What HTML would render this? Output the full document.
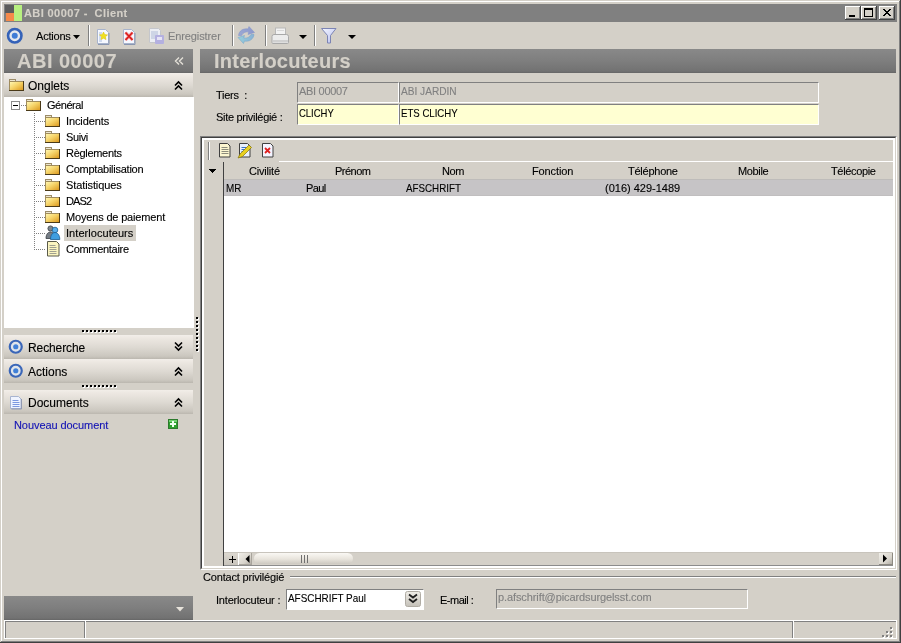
<!DOCTYPE html>
<html><head><meta charset="utf-8">
<style>
*{margin:0;padding:0;box-sizing:border-box}
html,body{width:901px;height:643px;overflow:hidden;background:#d4d0c8;font-family:"Liberation Sans",sans-serif;font-size:11px;color:#000}
.a{position:absolute}
.t{position:absolute;white-space:nowrap;line-height:13px;-webkit-text-stroke:0.12px currentColor}
.hdr{position:absolute;background:linear-gradient(#898989,#7e7e7e 50%,#727272 92%,#666 100%)}
.sec{position:absolute;left:4px;width:189px;height:24px;background:linear-gradient(#f2eee9 0,#ede8e2 12%,#dedad3 50%,#cbc7bf 88%,#bbb7af 100%)}
.b12{font-size:12px;line-height:14px}
svg{position:absolute;overflow:visible}
</style></head><body><div style="position:absolute;left:0;top:0;width:901px;height:643px;will-change:transform">
<!-- window frame -->
<div class="a" style="left:1px;top:1px;width:1px;height:640px;background:#fff"></div>
<div class="a" style="left:1px;top:1px;width:898px;height:1px;background:#fff"></div>
<div class="a" style="left:899px;top:1px;width:1px;height:641px;background:#808080"></div>
<div class="a" style="left:900px;top:0;width:1px;height:643px;background:#404040"></div>
<div class="a" style="left:1px;top:641px;width:899px;height:1px;background:#808080"></div>
<div class="a" style="left:0;top:642px;width:901px;height:1px;background:#404040"></div>

<!-- title bar -->
<div class="a" style="left:4px;top:4px;width:893px;height:18px;background:#808080"></div>
<div class="a" style="left:5px;top:5px;width:9px;height:8px;background:#5c5c5c"></div>
<div class="a" style="left:6px;top:13px;width:8px;height:8px;background:#f58a4a"></div>
<div class="a" style="left:14px;top:5px;width:8px;height:16px;background:#b8f080"></div>
<div class="t" style="left:24px;top:7px;font-weight:bold;color:#d4d0c8;letter-spacing:0.4px">ABI 00007 -&nbsp; Client</div>
<svg style="left:845px;top:6px" width="50" height="14" shape-rendering="crispEdges">
 <g id="wb"><rect x="0" y="0" width="16" height="14" fill="#404040"/><rect x="0" y="0" width="15" height="13" fill="#fff"/><rect x="1" y="1" width="14" height="12" fill="#808080"/><rect x="1" y="1" width="13" height="11" fill="#d4d0c8"/></g>
 <use href="#wb" x="16"/><use href="#wb" x="34"/>
 <rect x="4" y="9" width="6" height="2" fill="#000"/>
 <rect x="19" y="2" width="9" height="9" fill="#000"/><rect x="20" y="4" width="7" height="6" fill="#d4d0c8"/>
 <path d="M38 3h2v1h1v1h2v-1h1v-1h2v1h-1v1h-1v1h-1v1h1v1h1v1h1v1h-2v-1h-1v-1h-2v1h-1v1h-2v-1h1v-1h1v-1h1v-1h-1v-1h-1v-1h-1z" fill="#000"/>
</svg>

<!-- toolbar -->
<svg style="left:0;top:22px" width="360" height="26">
 <defs>
  <g id="tgt"><circle cx="7.75" cy="7.75" r="6.7" fill="#e4e8ee" stroke="#3462b8" stroke-width="2.6"/><circle cx="7.75" cy="7.75" r="3" fill="#3f7cd6"/></g><g id="tgt2"><circle cx="7.75" cy="7.75" r="6.0" fill="#dfe4ea" stroke="#3a66b8" stroke-width="2.2"/><circle cx="7.75" cy="7.75" r="2.6" fill="#4080d8"/></g>
 </defs>
 <use href="#tgt" x="7" y="6"/>
 <path d="M73 13h7l-3.5 4z" fill="#000"/>
 <rect x="88" y="3" width="1" height="21" fill="#808080"/><rect x="89" y="3" width="1" height="21" fill="#fff"/>
 <!-- new -->
 <path d="M97.5 7.5h8l3 3v11h-11z" fill="#f6f8ff" stroke="#a8b4cc"/><path d="M109 11v11.5h-11" stroke="#8a96b0" fill="none"/>
 <path d="M99 11h3M99 13h2M99 15h2M99 17h2M99 19h3" stroke="#a8bce0"/>
 <path d="M103.5 10l1.2 2.6 2.8.3-2.1 1.9.6 2.8-2.5-1.4-2.5 1.4.6-2.8-2.1-1.9 2.8-.3z" fill="#f0e020" stroke="#d8c000" stroke-width=".5"/>
 <!-- delete -->
 <path d="M123.5 7.5h8l3 3v11h-11z" fill="#f6f8ff" stroke="#a8b4cc"/><path d="M135 11v11.5h-11" stroke="#8a96b0" fill="none"/>
 <path d="M125.5 10.5l7 7.5M132.5 10.5l-7 7.5" stroke="#f49090" stroke-width="3"/>
 <path d="M125.5 10.5l7 7.5M132.5 10.5l-7 7.5" stroke="#d81818" stroke-width="1.4"/>
 <!-- save disabled -->
 <path d="M149.5 6.5h9l2 2v12h-11z" fill="#eceef4" stroke="#c4c6cc"/>
 <path d="M151 10h7M151 12h7M151 14h5M151 16h5" stroke="#b0bcd8" stroke-width="1"/>
 <rect x="155" y="13" width="9" height="9" rx="1" fill="#b4b0e0"/><rect x="157" y="15" width="5" height="3" fill="#e6e4f6"/>
 <rect x="232" y="3" width="1" height="21" fill="#808080"/><rect x="233" y="3" width="1" height="21" fill="#fff"/>
 <!-- refresh -->
 <defs><linearGradient id="rg1" x1="0" y1="0" x2="1" y2="0"><stop offset="0" stop-color="#9aa8d4"/><stop offset="1" stop-color="#8c98cc"/></linearGradient><linearGradient id="rg2" x1="0" y1="0" x2="1" y2="0"><stop offset="0" stop-color="#98d0dc"/><stop offset="1" stop-color="#88b0d4"/></linearGradient></defs>
 <path d="M238.5 13.5c.5-4.5 4.5-7.5 9.5-6.5l1-2.5 5.5 6-6.5 2 .8-2.5c-3-.6-6 .8-7.3 3.5z" fill="url(#rg1)" stroke="#8090c8" stroke-width=".5"/>
 <path d="M254 12.5c-.5 4.5-4.5 7.5-9.5 6.5l-1 2.5-5.5-6 6.5-2-.8 2.5c3 .6 6-.8 7.3-3.5z" fill="url(#rg2)" stroke="#70a0c8" stroke-width=".5"/>
 <rect x="265" y="3" width="1" height="21" fill="#808080"/><rect x="266" y="3" width="1" height="21" fill="#fff"/>
 <!-- printer -->
 <rect x="275.5" y="6" width="10" height="8" fill="#f2f2f2" stroke="#b8b8b8"/>
 <rect x="277" y="8" width="7" height="1" fill="#d8d8d8"/>
 <path d="M272 14.5q0-2 2-2h12.5q2 0 2 2v6q0 1-1 1h-14.5q-1 0-1-1z" fill="#ececec" stroke="#a8a8a8"/>
 <rect x="273" y="18" width="15" height="2.5" fill="#d0d0d0"/>
 <path d="M299 13h8l-4 4z" fill="#000"/>
 <rect x="314" y="3" width="1" height="21" fill="#808080"/><rect x="315" y="3" width="1" height="21" fill="#fff"/>
 <!-- funnel -->
 <defs><linearGradient id="fng" x1="0" y1="0" x2="1" y2="1"><stop offset="0" stop-color="#f4f6ff"/><stop offset="1" stop-color="#b8c0f0"/></linearGradient></defs><path d="M321.5 6.5h14.5l-5.5 7v7.5h-3v-7.5z" fill="url(#fng)" stroke="#7c84b4" stroke-linejoin="round"/>
 <path d="M348 13h8l-4 4z" fill="#000"/>
</svg>
<div class="t" style="left:36px;top:30px;letter-spacing:-0.2px">Actions</div>
<div class="t" style="left:168px;top:30px;color:#808080;letter-spacing:-0.1px">Enregistrer</div>

<!-- left panel -->
<div class="hdr" style="left:4px;top:49px;width:189px;height:24px"></div>
<div class="t" style="left:17px;top:50px;font-size:20px;line-height:23px;font-weight:bold;color:#d4d0c8;letter-spacing:0.5px">ABI 00007</div>
<svg style="left:174px;top:57px" width="10" height="9"><path d="M5 .5L1.5 4 5 7.5M9 .5L5.5 4 9 7.5" stroke="#e4e0d8" stroke-width="1.4" fill="none"/></svg>
<div class="sec" style="top:73px"></div>
<svg style="left:9px;top:78px" width="16" height="14" shape-rendering="crispEdges"><use href="#fold" x="0" y="1"/></svg>
<div class="t b12" style="left:28px;top:79px">Onglets</div>
<svg style="left:174px;top:81px" width="10" height="10"><path d="M1 4.5L4.5 1 8 4.5M1 8.5L4.5 5 8 8.5" stroke="#000" stroke-width="1.6" fill="none"/></svg>
<div class="a" style="left:4px;top:97px;width:190px;height:231px;background:#fff"></div>
<svg style="left:0;top:0" width="193" height="328" shape-rendering="crispEdges">
<defs><linearGradient id="fg" x1="0" y1="0" x2="1" y2="1"><stop offset="0" stop-color="#fff6b0"/><stop offset="0.45" stop-color="#f6d46a"/><stop offset="1" stop-color="#dc9a20"/></linearGradient><g id="fold"><rect x="0" y="0" width="7" height="3" fill="#9c8c68"/><rect x="1" y="1" width="5" height="1" fill="#ece6d0"/><rect x="0" y="2" width="15" height="10" fill="#4a3a18"/><rect x="0" y="2" width="14" height="9" fill="#a08c5c"/><rect x="1" y="3" width="13" height="8" fill="url(#fg)"/></g></defs>
<rect x="11.5" y="101.5" width="8" height="8" fill="#fff" stroke="#8c8c8c"/><rect x="13" y="105" width="5" height="1" fill="#000"/>
<path d="M21 105.5h5 M34.5 113V250 M36 121.5h9 M36 137.5h9 M36 153.5h9 M36 169.5h9 M36 185.5h9 M36 201.5h9 M36 217.5h9 M36 233.5h9 M36 249.5h9" stroke="#808080" stroke-width="1" stroke-dasharray="1 1" fill="none"/>
<use href="#fold" x="26" y="99"/>
<use href="#fold" x="45" y="115"/>
<use href="#fold" x="45" y="131"/>
<use href="#fold" x="45" y="147"/>
<use href="#fold" x="45" y="163"/>
<use href="#fold" x="45" y="179"/>
<use href="#fold" x="45" y="195"/>
<use href="#fold" x="45" y="211"/>
</svg>
<div class="a" style="left:64px;top:225px;width:72px;height:16px;background:#d4d0c8"></div>
<svg style="left:45px;top:225px" width="16" height="32">
 <circle cx="5.5" cy="3.5" r="2.6" fill="#7d858c" stroke="#3a3f44" stroke-width=".8"/>
 <path d="M1 13.5c0-4 1.8-6.5 4.5-6.5s4.5 2.5 4.5 6.5z" fill="#757d85" stroke="#3a3f44" stroke-width=".8"/>
 <circle cx="10" cy="5" r="2.8" fill="#58b0ec" stroke="#1c5c90" stroke-width=".8"/>
 <path d="M5.5 14.5c0-4.5 2-7 4.5-7s4.8 2.5 4.8 7z" fill="#3f9ee0" stroke="#1c5c90" stroke-width=".8"/>
 <path d="M2.5 16.5h9l2.5 2.5v12h-11.5z" fill="#fbf5c0" stroke="#5a5a4a"/>
 <path d="M4.5 20.5h6M4.5 22.5h7M4.5 24.5h7M4.5 26.5h7M4.5 28.5h7" stroke="#a0a090"/>
</svg>
<div class="t" style="left:47px;top:99px;letter-spacing:-0.45px">Général</div>
<div class="t" style="left:66px;top:115px;letter-spacing:-0.1px">Incidents</div>
<div class="t" style="left:66px;top:131px;letter-spacing:-0.4px">Suivi</div>
<div class="t" style="left:66px;top:147px;letter-spacing:-0.3px">Règlements</div>
<div class="t" style="left:66px;top:163px;letter-spacing:-0.25px">Comptabilisation</div>
<div class="t" style="left:66px;top:179px;letter-spacing:-0.1px">Statistiques</div>
<div class="t" style="left:66px;top:195px;letter-spacing:-0.9px">DAS2</div>
<div class="t" style="left:66px;top:211px;letter-spacing:-0.17px">Moyens de paiement</div>
<div class="t" style="left:66px;top:227px;letter-spacing:0.05px">Interlocuteurs</div>
<div class="t" style="left:66px;top:243px;letter-spacing:-0.3px">Commentaire</div>

<!-- splitter grips -->
<svg style="left:0;top:0" width="200" height="400" shape-rendering="crispEdges">
 <defs><g id="dot"><rect x="1" y="1" width="2" height="2" fill="#fff"/><rect x="0" y="0" width="2" height="2" fill="#000"/></g></defs>
 <use href="#dot" x="82" y="330"/><use href="#dot" x="86" y="330"/><use href="#dot" x="90" y="330"/><use href="#dot" x="94" y="330"/><use href="#dot" x="98" y="330"/><use href="#dot" x="102" y="330"/><use href="#dot" x="106" y="330"/><use href="#dot" x="110" y="330"/><use href="#dot" x="114" y="330"/>
 <use href="#dot" x="82" y="385"/><use href="#dot" x="86" y="385"/><use href="#dot" x="90" y="385"/><use href="#dot" x="94" y="385"/><use href="#dot" x="98" y="385"/><use href="#dot" x="102" y="385"/><use href="#dot" x="106" y="385"/><use href="#dot" x="110" y="385"/><use href="#dot" x="114" y="385"/>
 <use href="#dot" x="196" y="317"/><use href="#dot" x="196" y="321"/><use href="#dot" x="196" y="325"/><use href="#dot" x="196" y="329"/><use href="#dot" x="196" y="333"/><use href="#dot" x="196" y="337"/><use href="#dot" x="196" y="341"/><use href="#dot" x="196" y="345"/><use href="#dot" x="196" y="349"/>
</svg>

<div class="sec" style="top:335px"></div>
<svg style="left:7px;top:338px" width="18" height="18"><use href="#tgt2" x="1" y="1"/></svg>
<div class="t b12" style="left:28px;top:341px;letter-spacing:-0.1px">Recherche</div>
<svg style="left:174px;top:341px" width="10" height="10"><path d="M1 1.5L4.5 5 8 1.5M1 5.5L4.5 9 8 5.5" stroke="#000" stroke-width="1.6" fill="none"/></svg>
<div class="sec" style="top:359px"></div>
<svg style="left:7px;top:362px" width="18" height="18"><use href="#tgt2" x="1" y="1"/></svg>
<div class="t b12" style="left:28px;top:365px">Actions</div>
<svg style="left:174px;top:367px" width="10" height="10"><path d="M1 4.5L4.5 1 8 4.5M1 8.5L4.5 5 8 8.5" stroke="#000" stroke-width="1.6" fill="none"/></svg>
<div class="sec" style="top:390px"></div>
<svg style="left:9px;top:395px" width="14" height="16">
 <path d="M1.5 1.5h8l2.5 2.5v9.5h-10.5z" fill="#f0f4ff" stroke="#a8b4d0"/><path d="M12.5 4v10h-10" stroke="#9098b0" fill="none"/>
 <path d="M3.5 5.5h6M3.5 7.5h7M3.5 9.5h7M3.5 11.5h7" stroke="#7c98e0"/>
</svg>
<div class="t b12" style="left:28px;top:396px">Documents</div>
<svg style="left:174px;top:398px" width="10" height="10"><path d="M1 4.5L4.5 1 8 4.5M1 8.5L4.5 5 8 8.5" stroke="#000" stroke-width="1.6" fill="none"/></svg>
<div class="t" style="left:14px;top:419px;color:#1414b4;letter-spacing:-0.07px">Nouveau document</div>
<svg style="left:168px;top:419px" width="10" height="10" shape-rendering="crispEdges"><rect x="0" y="0" width="10" height="10" fill="#2c7a2c"/><rect x="1" y="1" width="8" height="8" fill="#2ea02e"/><rect x="1" y="1" width="8" height="2" fill="#70d070"/><rect x="4" y="2" width="2" height="6" fill="#f0fff0"/><rect x="2" y="4" width="6" height="2" fill="#f0fff0"/></svg>
<div class="hdr" style="left:4px;top:596px;width:189px;height:24px"></div>
<svg style="left:176px;top:607px" width="8" height="5"><path d="M0 0h8l-4 4.5z" fill="#e8e4dc"/></svg>

<!-- right panel -->
<div class="hdr" style="left:200px;top:49px;width:696px;height:24px"></div>
<div class="t" style="left:214px;top:50px;font-size:20px;line-height:23px;font-weight:bold;color:#d4d0c8;letter-spacing:0.25px">Interlocuteurs</div>
<div class="t" style="left:216px;top:89px;letter-spacing:-0.28px">Tiers&nbsp; :</div>
<div class="t" style="left:216px;top:111px;letter-spacing:-0.3px">Site privilégié :</div>
<div class="a" style="left:297px;top:82px;width:102px;height:21px;border-top:1px solid #808080;border-left:1px solid #808080;border-right:1px solid #fff;border-bottom:1px solid #fff"></div>
<div class="a" style="left:399px;top:82px;width:420px;height:21px;border-top:1px solid #808080;border-left:1px solid #808080;border-right:1px solid #fff;border-bottom:1px solid #fff"></div>
<div class="a" style="left:297px;top:104px;width:102px;height:21px;background:#ffffd2;border-top:1px solid #808080;border-left:1px solid #808080;border-right:1px solid #fff;border-bottom:1px solid #fff"></div>
<div class="a" style="left:399px;top:104px;width:420px;height:21px;background:#ffffd2;border-top:1px solid #808080;border-left:1px solid #808080;border-right:1px solid #fff;border-bottom:1px solid #fff"></div>
<div class="t" style="left:299px;top:85px;color:#808080;letter-spacing:-0.3px">ABI 00007</div>
<div class="t" style="left:401px;top:85px;color:#808080;transform:scaleX(0.92);transform-origin:0 0">ABI JARDIN</div>
<div class="t" style="left:299px;top:107px;transform:scaleX(0.86);transform-origin:0 0">CLICHY</div>
<div class="t" style="left:401px;top:107px;transform:scaleX(0.875);transform-origin:0 0">ETS CLICHY</div>

<!-- grid panel -->
<div class="a" style="left:200px;top:136px;width:697px;height:434px;border-top:1px solid #808080;border-left:1px solid #808080;border-right:1px solid #fff;border-bottom:1px solid #fff"></div>
<div class="a" style="left:201px;top:137px;width:695px;height:432px;border-top:1px solid #404040;border-left:1px solid #404040;border-right:1px solid #d4d0c8;border-bottom:1px solid #d4d0c8"></div>
<div class="a" style="left:202px;top:138px;width:693px;height:430px;border:2px solid #fff"></div>
<div class="a" style="left:223px;top:162px;width:1px;height:404px;background:#404040"></div>
<div class="a" style="left:279px;top:161px;width:614px;height:1px;background:#fff"></div>
<div class="a" style="left:224px;top:179px;width:669px;height:17px;background:#c6c4c6;border-top:1px solid #bebcba;border-bottom:1px solid #c0bebf"></div>
<div class="a" style="left:224px;top:196px;width:669px;height:356px;background:#fff"></div>
<svg style="left:203px;top:140px" width="80" height="40" shape-rendering="crispEdges">
 <rect x="5" y="2" width="1" height="18" fill="#808080"/><rect x="6" y="2" width="1" height="18" fill="#fff"/>
 <path d="M5.5 29h7.5l-3.75 4z" fill="#000"/>
</svg>
<svg style="left:215px;top:141px" width="62" height="20">
 <path d="M4.5 2.5h8l2.5 2.5v11h-10.5z" fill="#fcf6d0" stroke="#404040"/>
 <path d="M6.5 6.5h6M6.5 8.5h7M6.5 10.5h7M6.5 12.5h7" stroke="#8c8c7c"/>
 <path d="M24.5 2.5h8l2.5 2.5v11h-10.5z" fill="#e8f0fc" stroke="#404040"/>
 <path d="M26.5 6.5h5M26.5 8.5h5M26.5 10.5h4" stroke="#3870c8"/>
 <path d="M23 17l2-4 9-9 2.5 2.5-9 9z" fill="#e8d020" stroke="#807010" stroke-width=".7"/>
 <path d="M47.5 2.5h8l2.5 2.5v11h-10.5z" fill="#f4f4ff" stroke="#404040"/>
 <path d="M50 7l5 5M55 7l-5 5" stroke="#e02020" stroke-width="1.8"/>
</svg>
<div class="t" style="left:249px;top:165px;letter-spacing:-0.2px">Civilité</div>
<div class="t" style="left:335px;top:165px;letter-spacing:-0.5px">Prénom</div>
<div class="t" style="left:442px;top:165px;letter-spacing:-0.4px">Nom</div>
<div class="t" style="left:532px;top:165px;letter-spacing:-0.12px">Fonction</div>
<div class="t" style="left:628px;top:165px;letter-spacing:-0.25px">Téléphone</div>
<div class="t" style="left:738px;top:165px;letter-spacing:-0.35px">Mobile</div>
<div class="t" style="left:831px;top:165px;letter-spacing:-0.35px">Télécopie</div>
<div class="t" style="left:226px;top:182px;transform:scaleX(0.9);transform-origin:0 0">MR</div>
<div class="t" style="left:306px;top:182px;letter-spacing:-0.6px">Paul</div>
<div class="t" style="left:406px;top:182px;transform:scaleX(0.89);transform-origin:0 0">AFSCHRIFT</div>
<div class="t" style="left:605px;top:182px">(016) 429-1489</div>
<!-- scrollbar -->
<div class="a" style="left:224px;top:552px;width:669px;height:14px;background:#d4d0c8;border-top:1px solid #c8c4bc;border-bottom:1px solid #8c8c8c"></div>
<div class="a" style="left:224px;top:553px;width:14px;height:12px;background:linear-gradient(#dcd8d0,#c8c4bc)"></div>
<svg style="left:224px;top:553px" width="14" height="12" shape-rendering="crispEdges"><rect x="5" y="6" width="7" height="1" fill="#000"/><rect x="8" y="3" width="1" height="7" fill="#000"/><rect x="5" y="5.5" width="7" height="1.5" fill="#000" opacity=".5"/></svg>
<div class="a" style="left:238px;top:553px;width:1px;height:12px;background:#fff"></div>
<svg style="left:239px;top:553px" width="654" height="13">
 <defs><linearGradient id="sg" x1="0" y1="0" x2="0" y2="1"><stop offset="0" stop-color="#faf8f4"/><stop offset=".55" stop-color="#e8e4dc"/><stop offset="1" stop-color="#ccc8c0"/></linearGradient>
 <linearGradient id="bg2" x1="0" y1="0" x2="1" y2="1"><stop offset="0" stop-color="#f0eee8"/><stop offset=".6" stop-color="#d8d4cc"/><stop offset="1" stop-color="#a8a49c"/></linearGradient></defs>
 <rect x="0" y="0" width="13" height="12" fill="url(#bg2)"/><path d="M12.5 0v12M0 11.5h13" stroke="#a8a49c"/>
 <path d="M6.5 6l4-4v8z" fill="#000"/>
 <rect x="15" y="0" width="99" height="11" rx="5.5" fill="url(#sg)"/>
 <path d="M62.5 2v8M65.5 2v8M68.5 2v8" stroke="#707070"/>
 <rect x="640" y="0" width="14" height="12" fill="url(#bg2)"/><path d="M653.5 0v12M640 11.5h14" stroke="#8c8880"/>
 <path d="M648 5.5l-4-4v8z" fill="#000"/>
</svg>

<!-- contact -->
<div class="t" style="left:203px;top:571px;letter-spacing:-0.18px">Contact privilégié</div>
<div class="a" style="left:290px;top:576px;width:606px;height:1px;background:#808080"></div>
<div class="a" style="left:290px;top:577px;width:606px;height:1px;background:#fff"></div>
<div class="t" style="left:216px;top:594px;letter-spacing:-0.2px">Interlocuteur :</div>
<div class="a" style="left:286px;top:589px;width:138px;height:21px;background:#fff;border-top:1px solid #808080;border-left:1px solid #808080;border-right:1px solid #fff;border-bottom:1px solid #fff"></div>
<div class="t" style="left:288px;top:592px;transform:scaleX(0.9);transform-origin:0 0">AFSCHRIFT Paul</div>
<svg style="left:405px;top:591px" width="16" height="16">
 <defs><linearGradient id="cg" x1="0" y1="0" x2="0" y2="1"><stop offset="0" stop-color="#f0eee8"/><stop offset="1" stop-color="#c4c0b8"/></linearGradient></defs>
 <rect x=".5" y=".5" width="15" height="15" rx="2" fill="url(#cg)" stroke="#b0aca4"/>
 <path d="M4 3.5l4 3 4-3M4 8l4 3 4-3" stroke="#202020" stroke-width="1.8" fill="none"/>
</svg>
<div class="t" style="left:440px;top:594px;letter-spacing:-0.5px">E-mail :</div>
<div class="a" style="left:496px;top:589px;width:252px;height:20px;border-top:1px solid #808080;border-left:1px solid #808080;border-right:1px solid #fff;border-bottom:1px solid #fff"></div>
<div class="t" style="left:498px;top:591px;color:#808080;letter-spacing:-0.1px">p.afschrift@picardsurgelsst.com</div>

<!-- status bar -->
<div class="a" style="left:4px;top:620px;width:893px;height:1px;background:#fff"></div>
<div class="a" style="left:4px;top:620px;width:1px;height:19px;background:#fff"></div>
<div class="a" style="left:5px;top:621px;width:891px;height:1px;background:#808080"></div>
<div class="a" style="left:5px;top:621px;width:1px;height:17px;background:#808080"></div>
<div class="a" style="left:4px;top:638px;width:893px;height:1px;background:#fff"></div>
<div class="a" style="left:896px;top:621px;width:1px;height:18px;background:#fff"></div>
<div class="a" style="left:84px;top:621px;width:1px;height:17px;background:#808080"></div>
<div class="a" style="left:85px;top:621px;width:1px;height:17px;background:#fff"></div>
<div class="a" style="left:792px;top:621px;width:1px;height:17px;background:#808080"></div>
<div class="a" style="left:793px;top:621px;width:1px;height:17px;background:#fff"></div>
<svg style="left:882px;top:627px" width="12" height="12" shape-rendering="crispEdges">
 <use href="#dot2" x="8" y="0"/><use href="#dot2" x="4" y="4"/><use href="#dot2" x="8" y="4"/><use href="#dot2" x="0" y="8"/><use href="#dot2" x="4" y="8"/><use href="#dot2" x="8" y="8"/>
 <defs><g id="dot2"><rect x="1" y="1" width="2" height="2" fill="#fff"/><rect x="0" y="0" width="2" height="2" fill="#808080"/></g></defs>
</svg>
</div></body></html>
